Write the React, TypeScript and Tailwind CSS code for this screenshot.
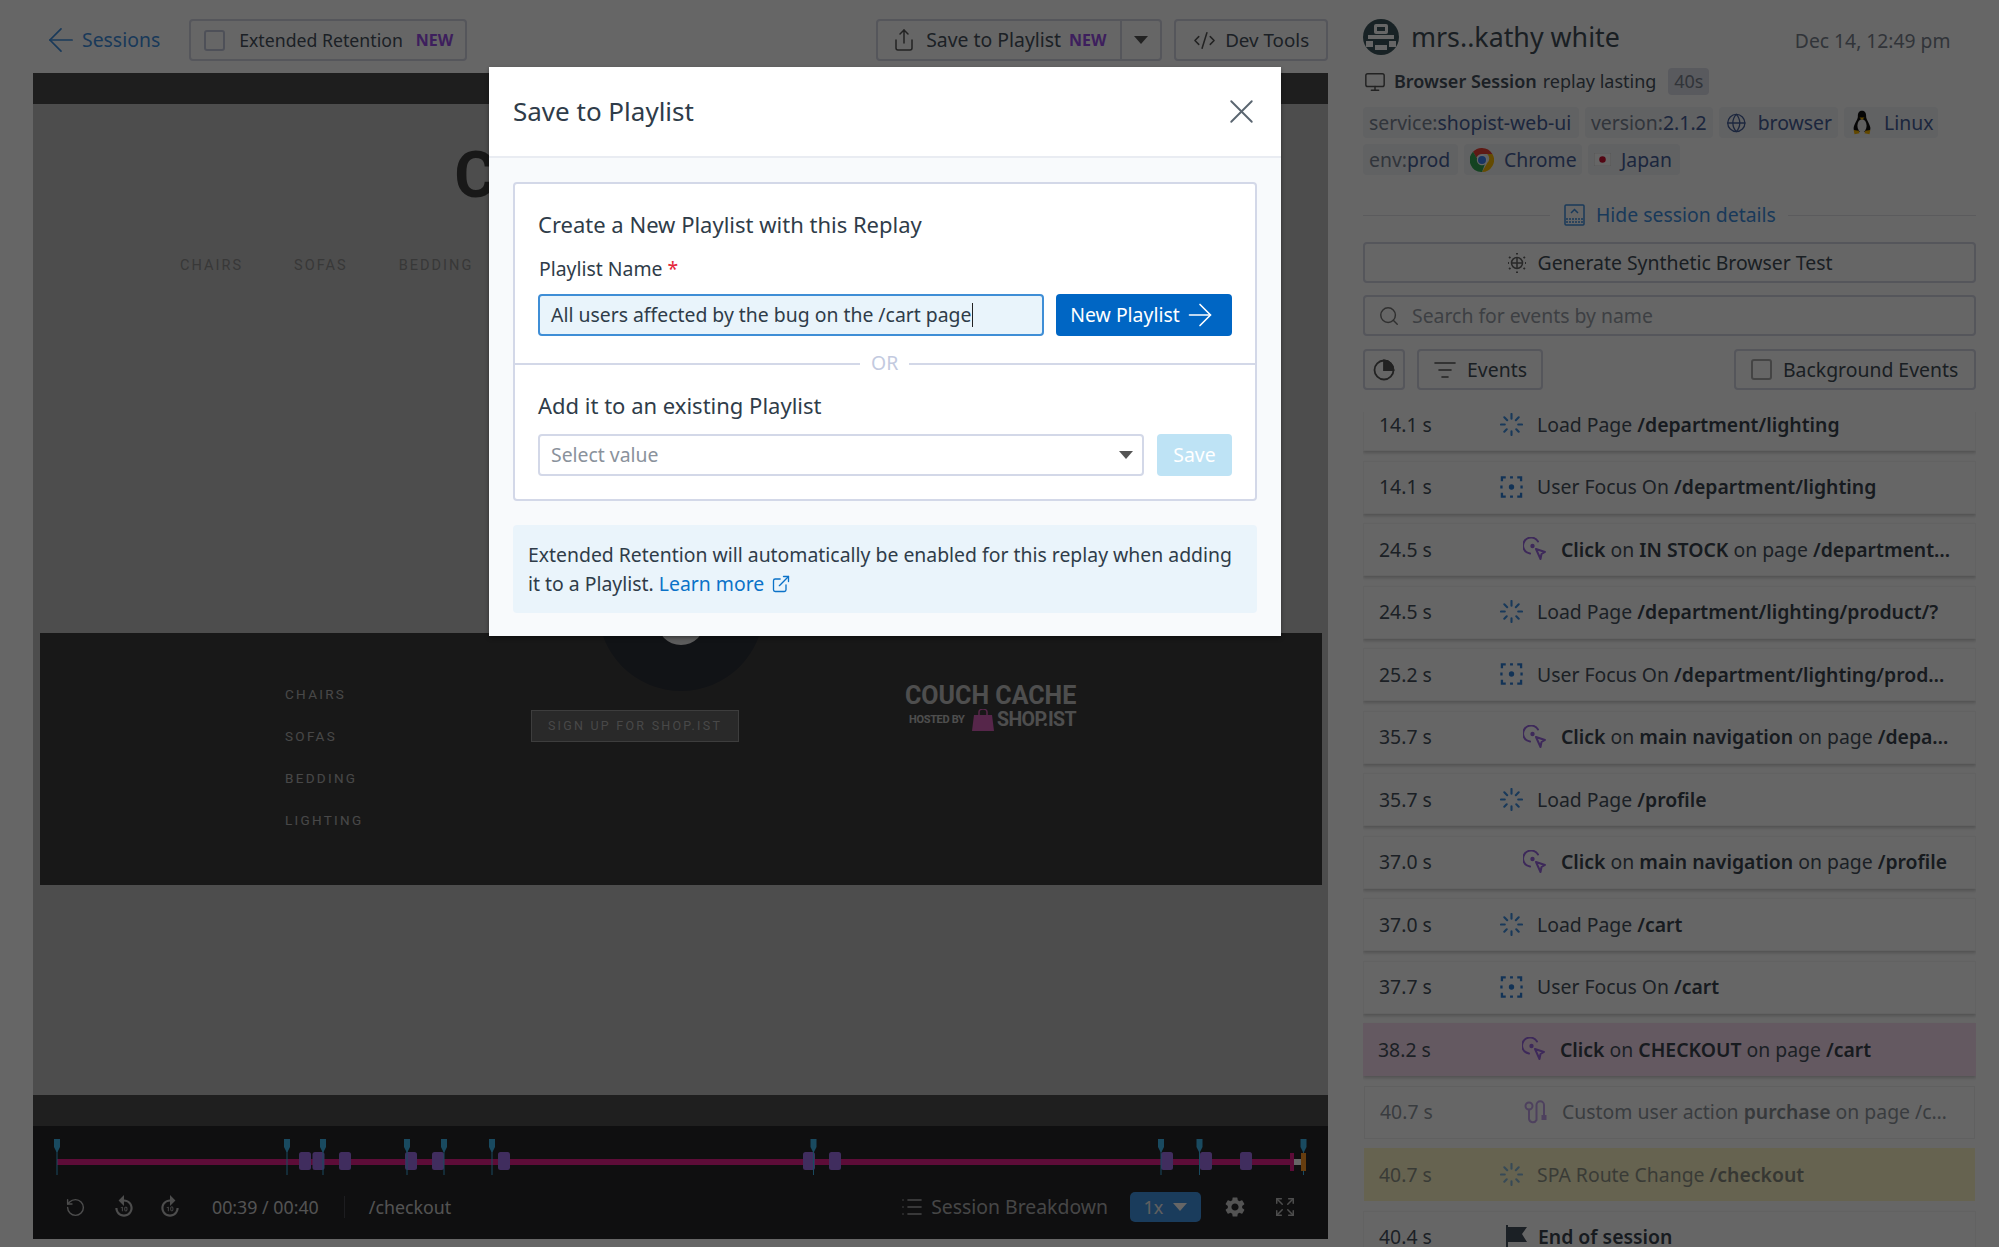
import React from "react";
import { ArrowLeft, ArrowRight, CodeXml, Expand, ExternalLink, Globe, List, ListFilter, Monitor, RotateCcw, Search, Share, X } from "lucide-react";
import { MdForward10, MdReplay10, MdSettings } from "react-icons/md";

const LoadIcon = () => (
  <svg width="23" height="23" viewBox="0 0 24 24" className="shrink-0" stroke="#3f8fe0" strokeWidth="2.200" strokeLinecap="round">
    <path d="M12 1v5M12 19v4M1 12h4M19 12h4M4.500 4.500l3 3M19.500 4.500l-3 3M4.500 19.500l2.500-2.500M19.500 19.500L17 17" />
  </svg>
);
const FocusIcon = () => (
  <svg width="23" height="24" viewBox="0 0 24 24" className="shrink-0" fill="none" stroke="#2f7fd8" strokeWidth="2.400">
    <path d="M6 2H2v4M18 2h4v4M2 18v4h4M22 18v4h-4M1.500 10.500v3M22.500 10.500v3M10.500 2h3M10.500 22h3" />
    <circle cx="12" cy="12" r="2.800" fill="#2f7fd8" stroke="none" />
  </svg>
);
const ClickIcon = () => (
  <svg width="24" height="24" viewBox="0 0 24 24" className="shrink-0" fill="none" stroke="#9a66e0" strokeWidth="2">
    <path d="M15 4.500A8 8 0 1 0 7 16.500" strokeLinecap="round" />
    <circle cx="9.500" cy="9" r="2.200" fill="#9a66e0" stroke="none" />
    <path d="M13 12l9 3-3.500 2L17.500 22z" strokeLinejoin="round" />
  </svg>
);
const CustomIcon = () => (
  <svg width="24" height="26" viewBox="0 0 24 26" className="shrink-0" fill="none" stroke="#9a66e0" strokeWidth="2">
    <circle cx="5" cy="7" r="3.500" />
    <path d="M5 10.500V20a4 4 0 0 0 7.500 1V6a3.700 3.700 0 0 1 7.500 0v10" />
    <rect x="17.500" y="16" width="5" height="5" fill="#9a66e0" stroke="none" />
  </svg>
);
const FlagIcon = () => (
  <svg width="24" height="24" viewBox="0 0 24 24" className="ml-[5px] mr-[-5px] shrink-0" fill="#45505c">
    <path d="M1 0h2v24H1zM3 2h19l-5 7 5 8H3z" />
  </svg>
);
const Avatar = () => (
  <svg width="36" height="36" viewBox="0 0 36 36" className="shrink-0">
    <circle cx="18" cy="18" r="18" fill="#3d565c" />
    <rect x="11" y="5" width="14" height="10" rx="2" fill="#fff" />
    <rect x="14" y="8" width="8" height="4" fill="#3d565c" />
    <rect x="5" y="16" width="26" height="4" fill="#fff" />
    <rect x="11" y="20" width="14" height="4" fill="#3d565c" />
    <rect x="3" y="22" width="7" height="6" fill="#fff" />
    <rect x="26" y="22" width="7" height="6" fill="#fff" />
    <rect x="12" y="26" width="12" height="5" fill="#fff" />
  </svg>
);
const Tux = () => (
  <svg width="22" height="25" viewBox="0 0 24 30" className="shrink-0">
    <path d="M12 1c-4 0-5 3-5 7 0 3-4 8-5 13-.500 3 1 5 3 5h14c2 0 3.500-2 3-5-1-5-5-10-5-13 0-4-1-7-5-7z" fill="#111" />
    <ellipse cx="12" cy="19" rx="5.500" ry="8" fill="#eee" />
    <path d="M9 9h6l-3 3zM2 24l6 1 1 3-6 1zM22 24l-6 1-1 3 6 1z" fill="#f4b400" />
  </svg>
);
const ChromeLogo = () => (
  <svg width="24" height="24" viewBox="0 0 24 24" className="shrink-0">
    <path d="M12 0a12 12 0 0 1 10.400 6H12a6 6 0 0 0-5.600 3.800L3 3.800A12 12 0 0 1 12 0z" fill="#ea4335" />
    <path d="M22.400 6A12 12 0 0 1 12 24l5.200-9a6 6 0 0 0 0-9z" fill="#fbbc05" />
    <path d="M12 24A12 12 0 0 1 3 3.800L8 12a5 5 0 0 0 7 4l-3 8z" fill="#34a853" />
    <circle cx="12" cy="12" r="5.200" fill="#fff" />
    <circle cx="12" cy="12" r="4" fill="#4285f4" />
  </svg>
);
const JapanFlag = () => (
  <svg width="17" height="13" viewBox="0 0 18 14" className="shrink-0">
    <rect width="18" height="14" rx="1" fill="#ffffff" stroke="#bbb" strokeWidth="0.500" />
    <circle cx="9" cy="7" r="3.500" fill="#d01030" />
  </svg>
);
const HideIcon = () => (
  <svg width="21" height="22" viewBox="0 0 21 22" fill="none" stroke="#3f90e0" strokeWidth="1.500">
    <rect x="1" y="1" width="19" height="20" rx="1" />
    <path d="M7 9l3.500-3.500L14 9" />
    <path d="M2 15h17M2 18h17" strokeDasharray="2 1" />
  </svg>
);
const SynthIcon = () => (
  <svg width="20" height="22" viewBox="0 0 20 22" fill="none" stroke="#666" strokeWidth="1.500">
    <circle cx="10" cy="11" r="5.500" />
    <path d="M10 5.500v11M4.500 11h11" />
    <path d="M10 1v1.500M10 19.500V21M2 5l1.500 1M18 5l-1.500 1M2 17l1.500-1M18 17l-1.500-1M1 11h1M18 11h1" strokeWidth="2" />
  </svg>
);
const PieIcon = () => (
  <svg width="22" height="22" viewBox="0 0 22 22" fill="none" stroke="#555" strokeWidth="1.800">
    <circle cx="11" cy="11" r="9.500" />
    <path d="M11 1.500A9.500 9.500 0 0 1 20.500 11H11z" fill="#555" />
  </svg>
);

type Seg = [string, boolean?];
type Kind = "load" | "focus" | "click" | "custom" | "flag";
type Ev = { t: string; k: Kind; s: Seg[]; tone?: "pink" | "yellow" | "faded" };

const events: Ev[] = [
  { t: "14.1 s", k: "load", s: [["Load Page "], ["/department/lighting", true]] },
  { t: "14.1 s", k: "focus", s: [["User Focus On "], ["/department/lighting", true]] },
  { t: "24.5 s", k: "click", s: [["Click", true], [" on "], ["IN STOCK", true], [" on page "], ["/department…", true]] },
  { t: "24.5 s", k: "load", s: [["Load Page "], ["/department/lighting/product/?", true]] },
  { t: "25.2 s", k: "focus", s: [["User Focus On "], ["/department/lighting/prod…", true]] },
  { t: "35.7 s", k: "click", s: [["Click", true], [" on "], ["main navigation", true], [" on page "], ["/depa…", true]] },
  { t: "35.7 s", k: "load", s: [["Load Page "], ["/profile", true]] },
  { t: "37.0 s", k: "click", s: [["Click", true], [" on "], ["main navigation", true], [" on page "], ["/profile", true]] },
  { t: "37.0 s", k: "load", s: [["Load Page "], ["/cart", true]] },
  { t: "37.7 s", k: "focus", s: [["User Focus On "], ["/cart", true]] },
  { t: "38.2 s", k: "click", tone: "pink", s: [["Click", true], [" on "], ["CHECKOUT", true], [" on page "], ["/cart", true]] },
  { t: "40.7 s", k: "custom", tone: "faded", s: [["Custom user action "], ["purchase", true], [" on page "], ["/c…"]] },
  { t: "40.7 s", k: "load", tone: "yellow", s: [["SPA Route Change "], ["/checkout", true]] },
  { t: "40.4 s", k: "flag", s: [["End of session", true]] },
];

function EventRow({ e }: { e: Ev }) {
  const indented = e.k === "click" || e.k === "custom";
  const base = "flex h-[53px] shrink-0 items-center whitespace-nowrap text-[19.400px] text-[#47525e]";
  const tone =
    e.tone === "pink"
      ? "bg-[#fbdff2] shadow-[0_2px_3px_rgba(0,0,0,0.2)]"
      : e.tone === "yellow"
        ? "mx-[1px] bg-[#fff7c8]"
        : e.tone === "faded"
          ? "mx-[1px] border border-[#f0f0f0] bg-white"
          : "border border-[#f4f4f4] bg-white shadow-[0_2px_3px_rgba(0,0,0,0.2)]";
  const fade = e.tone === "faded" || e.tone === "yellow" ? "opacity-60" : "";
  return (
    <div className={`${base} ${tone}`}>
      <div className={`flex items-center ${fade}`}>
        <span className="ml-[15px] w-[121px]">{e.t}</span>
        {indented && <span className="w-[23px]" />}
        {e.k === "load" && <LoadIcon />}
        {e.k === "focus" && <FocusIcon />}
        {e.k === "click" && <ClickIcon />}
        {e.k === "custom" && <CustomIcon />}
        {e.k === "flag" && <FlagIcon />}
        <span className="ml-[14px]">
          {e.s.map(([txt, b], i) => (
            <span key={i} className={b ? "font-semibold text-[#3a444f]" : ""}>
              {txt}
            </span>
          ))}
        </span>
      </div>
    </div>
  );
}

function Chip({ children, w }: { children: React.ReactNode; w: string }) {
  return (
    <span className={`flex h-[31px] items-center gap-[10px] rounded-[4px] bg-[#f3f4f8] px-[6px] text-[19.400px] whitespace-nowrap text-[#46609a] ${w}`}>
      {children}
    </span>
  );
}

const pins = [57, 287, 323, 407, 444, 492, 813.5, 1161, 1199.5, 1303.5];
const blocks = [299, 312.5, 339, 405, 432, 498, 803, 829, 1161, 1200, 1240];

const Timeline = () => (
  <svg width="1295" height="58" viewBox="33 1126 1295 58" className="block">
    <rect x="57" y="1159" width="1233" height="6" fill="#e81f8c" />
    {blocks.map((x) => (
      <rect key={x} x={x} y="1152" width="12" height="18" rx="2.500" fill="#a070ea" />
    ))}
    {pins.map((x) => (
      <g key={x} fill="#3fb8f0">
        <path d={`M${x - 3} 1139h6v8l-2.500 5h-1l-2.500-5z`} />
        <rect x={x - 0.5} y="1150" width="1" height="25" />
      </g>
    ))}
    <rect x="1290" y="1153" width="4" height="18" fill="#e81f8c" />
    <rect x="1294" y="1159" width="7" height="6" fill="#ffffff" />
    <rect x="1301" y="1153" width="5" height="18" fill="#ff9a26" />
  </svg>
);

export default function App() {
  return (
    <div className="relative flex h-[1247px] w-[1999px] overflow-hidden bg-white font-['Noto_Sans',sans-serif] text-[18px]">
      {/* Left side */}
      <div className="w-[1363px] shrink-0 pt-[19px]">
        <div className="flex h-[42px] items-center pl-[42px]">
          <ArrowLeft size={38} strokeWidth={1.1} className="text-[#3f90e0]" />
          <span className="ml-[2px] text-[19.400px] text-[#3f90e0]">Sessions</span>
          <div className="ml-[29px] flex h-[42px] w-[278px] items-center rounded-[4px] border-2 border-[#d4d6e4] pl-[13px]">
            <span className="h-[21px] w-[21px] rounded-[3px] border-2 border-[#c4c8dc] bg-white" />
            <span className="ml-[14px] text-[17.700px] text-[#47525e]">Extended Retention</span>
            <span className="ml-[13px] text-[16px] font-bold text-[#9a4ee8]">NEW</span>
          </div>
          <div className="ml-[409px] flex h-[42px] w-[286px] items-center rounded-[4px] border-2 border-[#d4d6e4]">
            <div className="flex h-full w-[244px] items-center border-r-2 border-[#d4d6e4] pl-[14px]">
              <Share size={24} strokeWidth={1.5} className="text-[#555]" />
              <span className="ml-[10px] text-[19.400px] whitespace-nowrap text-[#47525e]">Save to Playlist</span>
              <span className="ml-[8px] text-[16px] font-bold text-[#9a4ee8]">NEW</span>
            </div>
            <div className="flex flex-1 items-center justify-center">
              <span className="h-0 w-0 border-x-[7px] border-t-[8px] border-x-transparent border-t-[#555]" />
            </div>
          </div>
          <div className="ml-[12px] flex h-[42px] w-[154px] items-center justify-center gap-[9px] rounded-[4px] border-2 border-[#d4d6e4] text-[18.800px] text-[#47525e]">
            <CodeXml size={23} strokeWidth={1.6} className="text-[#555]" />
            <span>Dev Tools</span>
          </div>
        </div>

        <div className="mt-[12px] ml-[33px] flex h-[1166px] w-[1295px] flex-col bg-[#c0c0c0]">
          <div className="h-[31px] shrink-0 bg-[#4b4b4b]" />
          <div className="relative h-[991px] shrink-0">
            <div className="h-[529px] overflow-hidden">
              <div className="pt-[42px] text-center font-['Roboto',sans-serif] text-[64px] leading-[60px] font-bold tracking-[0.02em] text-[#3e3e3e]">COUCH CACHE</div>
              <div className="mt-[49px] flex gap-[51px] pl-[147px] font-['Roboto',sans-serif] text-[14.500px] tracking-[0.14em] text-[#8c8c8c]">
                <span>CHAIRS</span>
                <span>SOFAS</span>
                <span>BEDDING</span>
              </div>
            </div>
            <div className="relative ml-[7px] flex h-[252px] w-[1282px] bg-[#3e3e3e] font-['Roboto',sans-serif] text-[#b4b4b4]">
              <div className="absolute top-[-108px] left-[558px] h-[166px] w-[166px] overflow-hidden rounded-full bg-[#2c3038]">
                <div className="absolute top-[72px] left-[59px] h-[48px] w-[48px] rounded-full bg-[#e8e8e8]" />
              </div>
              <div className="ml-[245px] flex w-[246px] flex-col gap-[25px] pt-[53px] text-[13.500px] leading-[17px] tracking-[0.17em]">
                <span>CHAIRS</span>
                <span>SOFAS</span>
                <span>BEDDING</span>
                <span>LIGHTING</span>
              </div>
              <div className="mt-[77px] flex h-[32px] w-[208px] items-center justify-center border border-[#9a9a9a] bg-[#666] text-[12.500px] tracking-[0.18em]">SIGN UP FOR SHOP.IST</div>
              <div className="ml-[166px] w-[175px] pt-[53px] text-[#c4c4c4]">
                <div className="text-[25px] leading-[20px] font-bold whitespace-nowrap">COUCH CACHE</div>
                <div className="mt-[3px] flex items-center pl-[4px]">
                  <span className="mr-[6px] w-[57px] text-[11px] font-bold tracking-[-0.03em] whitespace-nowrap">HOSTED BY</span>
                  <svg width="22" height="22" viewBox="0 0 22 22" className="shrink-0">
                    <path d="M2 6h18l2 16H0z" fill="#d860b8" />
                    <path d="M7 6V3a4 3 0 0 1 8 0v3" fill="none" stroke="#d860b8" strokeWidth="1.500" />
                  </svg>
                  <span className="ml-[3px] text-[19.500px] leading-[22px] font-bold tracking-[-0.03em] whitespace-nowrap">SHOP.IST</span>
                </div>
              </div>
            </div>
          </div>
          <div className="h-[31px] shrink-0 bg-[#4e4e4e]" />
          <div className="flex-1 bg-[#26262a]">
            <Timeline />
            <div className="flex h-[46px] items-center pl-[32px] text-[#d0d0d0]">
              <RotateCcw size={21} strokeWidth={1.6} className="text-[#c0c0c0]" />
              <MdReplay10 size={26} className="ml-[25px] text-[#c0c0c0]" />
              <MdForward10 size={26} className="ml-[20px] text-[#c0c0c0]" />
              <span className="ml-[29px] text-[17.800px] whitespace-nowrap">00:39 / 00:40</span>
              <span className="ml-[25px] h-[22px] w-px bg-[#4a4a50]" />
              <span className="ml-[24px] text-[17.800px]">/checkout</span>
              <List size={24} strokeWidth={1.6} className="ml-[449px] text-[#b0b0b0]" />
              <span className="ml-[7px] text-[19.400px] whitespace-nowrap text-[#b0b0b0]">Session Breakdown</span>
              <div className="ml-[22px] flex h-[30px] w-[71px] items-center justify-center gap-[10px] rounded-[5px] bg-[#4197e6] text-[#f0f0f0]">
                <span>1x</span>
                <span className="h-0 w-0 border-x-[7px] border-t-[8px] border-x-transparent border-t-white" />
              </div>
              <MdSettings size={24} className="ml-[22px] text-[#d0d0d0]" />
              <Expand size={22} strokeWidth={1.6} className="ml-[27px] text-[#c0c0c0]" />
            </div>
          </div>
        </div>
      </div>

      {/* Right side */}
      <div className="flex h-[1247px] w-[613px] shrink-0 flex-col overflow-hidden pt-[19px] text-[#47525e]">
        <div className="flex h-[36px] items-center">
          <Avatar />
          <span className="ml-[12px] text-[26.800px] whitespace-nowrap text-[#434e58]">mrs..kathy white</span>
          <span className="mt-[8px] ml-[175px] text-[19.300px] whitespace-nowrap text-[#7a838f]">Dec 14, 12:49 pm</span>
        </div>
        <div className="mt-[13px] flex h-[27px] items-center whitespace-nowrap">
          <Monitor size={22} strokeWidth={1.6} className="ml-[1px] text-[#555]" />
          <span className="ml-[8px] font-semibold">Browser Session</span>
          <span className="ml-[6px]">replay lasting</span>
          <span className="ml-[12px] flex h-[27px] w-[41px] items-center justify-center rounded-[4px] bg-[#dfe1ea] text-[#7a8290]">40s</span>
        </div>
        <div className="mt-[12px] flex gap-[6px]">
          <Chip w="w-[216px]"><span><span className="text-[#7a8494]">service:</span>shopist-web-ui</span></Chip>
          <Chip w="w-[128px]"><span><span className="text-[#7a8494]">version:</span>2.1.2</span></Chip>
          <Chip w="w-[119px] pl-[7px] gap-[11px]"><Globe size={22} strokeWidth={1.5} />browser</Chip>
          <Chip w="w-[94px] pl-[7px] gap-[11px]"><Tux />Linux</Chip>
        </div>
        <div className="mt-[6px] flex gap-[6px]">
          <Chip w="w-[95px]"><span><span className="text-[#7a8494]">env:</span>prod</span></Chip>
          <Chip w="w-[118px]"><ChromeLogo />Chrome</Chip>
          <Chip w="w-[92px]"><JapanFlag />Japan</Chip>
        </div>
        <div className="mt-[29px] flex h-[22px] items-center">
          <span className="h-px w-[187px] bg-[#e4e4e8]" />
          <span className="ml-[14px]"><HideIcon /></span>
          <span className="ml-[11px] text-[19.400px] whitespace-nowrap text-[#3f90e0]">Hide session details</span>
          <span className="ml-[12px] h-px flex-1 bg-[#e4e4e8]" />
        </div>
        <div className="mt-[16px] flex h-[41px] items-center justify-center gap-[11px] rounded-[4px] border-2 border-[#d4d6e4] text-[19.400px] text-[#434e58]">
          <SynthIcon />
          <span>Generate Synthetic Browser Test</span>
        </div>
        <div className="mt-[12px] flex h-[41px] items-center rounded-[4px] border-2 border-[#d4d6e4] pl-[13px] text-[19.400px] text-[#9a9fa8]">
          <Search size={22} strokeWidth={1.6} className="text-[#777]" />
          <span className="ml-[12px]">Search for events by name</span>
        </div>
        <div className="mt-[13px] flex h-[41px] items-stretch text-[19.400px] text-[#434e58]">
          <div className="flex w-[42px] items-center justify-center rounded-[4px] border-2 border-[#d4d6e4]"><PieIcon /></div>
          <div className="ml-[12px] flex w-[126px] items-center justify-center gap-[10px] rounded-[4px] border-2 border-[#d4d6e4]">
            <ListFilter size={24} strokeWidth={1.6} className="text-[#555]" />
            <span>Events</span>
          </div>
          <div className="ml-auto flex w-[242px] items-center gap-[11px] rounded-[4px] border-2 border-[#d4d6e4] pl-[15px]">
            <span className="h-[21px] w-[21px] rounded-[3px] border-2 border-[#aaa]" />
            <span>Background Events</span>
          </div>
        </div>
        <div className="mt-[22px] min-h-0 flex-1 overflow-hidden">
          <div className="mt-[-14px] flex flex-col gap-[9.500px]">
            {events.map((e, i) => (
              <EventRow key={i} e={e} />
            ))}
          </div>
        </div>
      </div>

      {/* Dim backdrop */}
      <div className="absolute inset-0 bg-black/60" />

      {/* Modal */}
      <div className="absolute top-[67px] left-[489px] h-[569px] w-[792px] bg-[#f8fafc] text-[19.400px] text-[#2f3c49] shadow-[0_2px_4px_rgba(0,0,0,0.4)]">
        <div className="flex h-[91px] items-center justify-between border-b-2 border-[#e9ecf2] bg-white pr-[19px] pl-[24px]">
          <span className="text-[26px]">Save to Playlist</span>
          <X size={41} strokeWidth={1.1} className="text-[#5a6570]" />
        </div>
        <div className="px-[24px] pt-[24px]">
          <div className="h-[319px] rounded-[4px] border-2 border-[#d3d8e8] bg-white">
            <div className="relative h-[181px] border-b-2 border-[#d3d8e8] px-[23px] pt-[26px]">
              <div className="text-[22px] leading-[28px]">Create a New Playlist with this Replay</div>
              <div className="mt-[19px] pl-[1px] leading-[24px]">
                Playlist Name <span className="text-[#e5283c]">*</span>
              </div>
              <div className="mt-[13px] flex gap-[12px]">
                <div className="flex h-[42px] w-[506px] items-center rounded-[4px] border-2 border-[#3f8ed6] bg-[#e9f4fb] pl-[11px] whitespace-nowrap">
                  <span>All users affected by the bug on the /cart page</span>
                  <span className="h-[24px] w-px bg-[#222]" />
                </div>
                <div className="flex h-[42px] w-[176px] items-center justify-center gap-[2px] rounded-[4px] bg-[#0066c4] text-white">
                  <span>New Playlist</span>
                  <ArrowRight size={36} strokeWidth={1.1} />
                </div>
              </div>
              <span className="absolute bottom-[-13px] left-[345px] bg-white px-[11px] leading-[26px] text-[#c3cadf]">OR</span>
            </div>
            <div className="px-[23px] pt-[26px]">
              <div className="text-[22px] leading-[28px]">Add it to an existing Playlist</div>
              <div className="mt-[15px] flex gap-[13px]">
                <div className="flex h-[42px] w-[606px] items-center justify-between rounded-[4px] border-2 border-[#d3d8e8] pr-[9px] pl-[11px] text-[#8a929c]">
                  <span>Select value</span>
                  <span className="h-0 w-0 border-x-[7px] border-t-[8px] border-x-transparent border-t-[#555]" />
                </div>
                <div className="flex h-[42px] w-[75px] items-center justify-center rounded-[4px] bg-[#bee3f5] text-white">Save</div>
              </div>
            </div>
          </div>
          <div className="mt-[24px] h-[88px] rounded-[4px] bg-[#eaf4fb] px-[15px] py-[15px] leading-[29px] whitespace-nowrap">
            Extended Retention will automatically be enabled for this replay when adding
            <br />
            it to a Playlist. <span className="text-[#0b72c8]">Learn more</span>
            <ExternalLink size={20} strokeWidth={1.6} className="ml-[7px] inline align-[-3px] text-[#0b72c8]" />
          </div>
        </div>
      </div>
    </div>
  );
}
